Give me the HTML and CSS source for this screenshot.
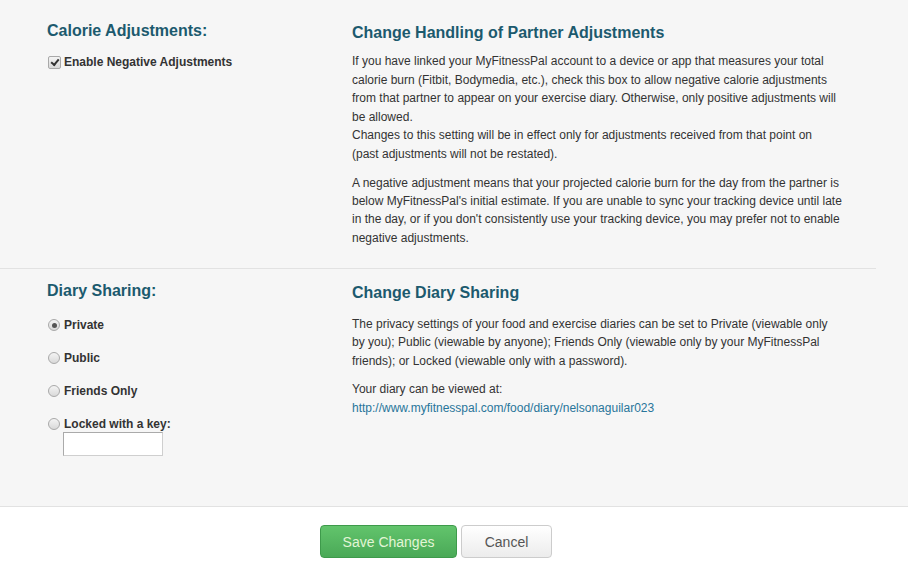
FILE: index.html
```html
<!DOCTYPE html>
<html>
<head>
<meta charset="utf-8">
<link rel="stylesheet" href="styles.css">
</head>
<body>
<div class="settings">
  <div class="row first">
    <div class="left">
      <h2>Calorie Adjustments:</h2>
      <label class="opt check"><input type="checkbox" checked> Enable Negative Adjustments</label>
    </div>
    <div class="right">
      <h3>Change Handling of Partner Adjustments</h3>
      <p>If you have linked your MyFitnessPal account to a device or app that measures your total calorie burn (Fitbit, Bodymedia, etc.), check this box to allow negative calorie adjustments from that partner to appear on your exercise diary. Otherwise, only positive adjustments will be allowed.<br>Changes to this setting will be in effect only for adjustments received from that point on (past adjustments will not be restated).</p>
      <p>A negative adjustment means that your projected calorie burn for the day from the partner is below MyFitnessPal's initial estimate. If you are unable to sync your tracking device until late in the day, or if you don't consistently use your tracking device, you may prefer not to enable negative adjustments.</p>
    </div>
  </div>
  <div class="row second">
    <div class="left">
      <h2>Diary Sharing:</h2>
      <label class="opt"><input type="radio" name="s" checked> Private</label>
      <label class="opt"><input type="radio" name="s"> Public</label>
      <label class="opt"><input type="radio" name="s"> Friends Only</label>
      <label class="opt"><input type="radio" name="s"> Locked with a key:</label>
      <input class="key" type="text">
    </div>
    <div class="right">
      <h3>Change Diary Sharing</h3>
      <p>The privacy settings of your food and exercise diaries can be set to Private (viewable only by you); Public (viewable by anyone); Friends Only (viewable only by your MyFitnessPal friends); or Locked (viewable only with a password).</p>
      <p>Your diary can be viewed at:<br><a href="#">http://www.myfitnesspal.com/food/diary/nelsonaguilar023</a></p>
    </div>
  </div>
</div>
<div class="actions">
  <button class="btn save">Save Changes</button>
  <button class="btn cancel">Cancel</button>
</div>
</body>
</html>
```
FILE: styles.css
```css
html, body {
  margin: 0;
  padding: 0;
  background: #ffffff;
  font-family: "Liberation Sans", Arial, sans-serif;
  color: #333333;
}
.settings {
  background: #f6f6f6;
  border-bottom: 1px solid #e2e2e2;
  height: 506px;
}
.row {
  display: flex;
  width: 829px;
  padding-left: 47px;
}
.row.first {
  height: 246px;
  padding-top: 22px;
  border-bottom: 1px solid #e2e2e2;
}
.row.second {
  padding-top: 13px;
}
.left {
  width: 305px;
  flex: none;
}
.right {
  width: 490px;
}
h2 {
  margin: 0;
  font-size: 16px;
  font-weight: bold;
  color: #1c5a6e;
  line-height: 18px;
}
h3 {
  margin: 2px 0 0 0;
  font-size: 16px;
  font-weight: bold;
  color: #1c5a6e;
  line-height: 18px;
}
.right p {
  margin: 11px 0 0 0;
  font-size: 12px;
  line-height: 18.4px;
  color: #333333;
}
.first .right h3 + p {
  margin-top: 10px;
  line-height: 18.6px;
}
.first .right p + p {
  margin-top: 10px;
}
.second .right h3 + p {
  margin-top: 13px;
}
.second .right p + p {
  margin-top: 10px;
}
.right a {
  color: #28759a;
  text-decoration: none;
}
.opt {
  display: flex;
  align-items: center;
  font-size: 12px;
  font-weight: bold;
  color: #333333;
  height: 14px;
}
.first .opt { margin-top: 15px; }
.second .opt { margin-top: 18px; }
.second .opt + .opt { margin-top: 19px; }
.opt input {
  appearance: none;
  -webkit-appearance: none;
  margin: 0 4px 0 1px;
  width: 12px;
  height: 12px;
  flex: none;
  box-sizing: border-box;
  border: 1px solid #a9a9a9;
  background: linear-gradient(#f4f4f4, #d9d9d9);
  display: grid;
  place-items: center;
}
.opt input[type="radio"] {
  border-radius: 50%;
}
.opt input[type="radio"]:checked::after {
  content: "";
  width: 5px;
  height: 5px;
  border-radius: 50%;
  background: #555555;
}
.opt input[type="checkbox"] {
  border-radius: 2px;
  width: 13px;
  height: 13px;
  margin-right: 3px;
}
.opt input[type="checkbox"]:checked::after {
  content: "";
  width: 6px;
  height: 3px;
  border-left: 2px solid #333333;
  border-bottom: 2px solid #333333;
  transform: translate(0, -1px) rotate(-50deg);
}
.key {
  display: block;
  margin: 1px 0 0 16px;
  width: 100px;
  height: 24px;
  box-sizing: border-box;
  border: 1px solid #cfcfcf;
  border-top-color: #aaaaaa;
  border-left-color: #aaaaaa;
  background: #ffffff;
}
.actions {
  display: flex;
  justify-content: center;
  gap: 4px;
  width: 872px;
  padding-top: 18px;
}
.btn {
  height: 33px;
  font-family: "Liberation Sans", Arial, sans-serif;
  font-size: 14px;
  border-radius: 4px;
  cursor: pointer;
}
.save {
  width: 137px;
  background: linear-gradient(#62c46c, #4aa957);
  border: 1px solid #3e9a4b;
  color: #e3f5d6;
}
.cancel {
  width: 91px;
  background: linear-gradient(#ffffff, #ececec);
  border: 1px solid #cccccc;
  color: #555555;
}
```
